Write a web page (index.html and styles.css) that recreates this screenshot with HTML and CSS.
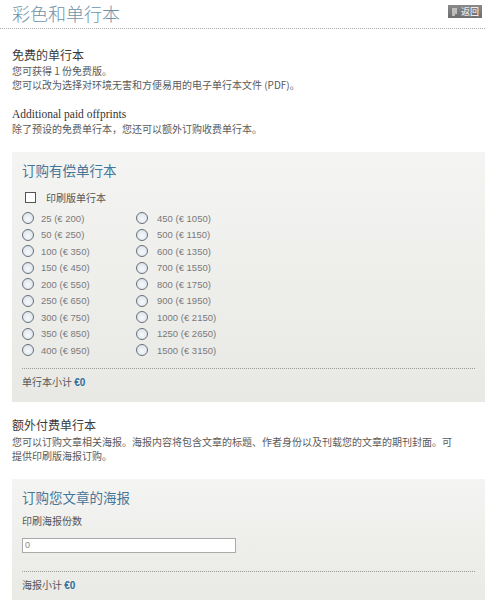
FILE: index.html
```html
<!DOCTYPE html>
<html lang="zh">
<head>
<meta charset="utf-8">
<title>彩色和单行本</title>
<link rel="stylesheet" href="styles.css">
</head>
<body>
<header class="top">
  <h1 class="title">彩色和单行本</h1>
  <a class="back-btn"><svg class="back-ico" width="7" height="8" viewBox="0 0 7 8"><path d="M1 1h5M1 3h5M1 5h5M1 7h3" stroke="#fff" stroke-width="1" fill="none"/></svg>返回</a>
</header>
<main class="page">
  <h2 class="sec-title">免费的单行本</h2>
  <p class="small">您可获得 1 份免费版。<br>您可以改为选择对环境无害和方便易用的电子单行本文件 (PDF)。</p>
  <h3 class="serif-title">Additional paid offprints</h3>
  <p class="small one">除了预设的免费单行本，您还可以额外订购收费单行本。</p>

  <section class="box box1">
    <h2 class="box-title">订购有偿单行本</h2>
    <label class="check-row"><span class="checkbox"></span>印刷版单行本</label>
    <div class="radios">
      <label class="radio-row"><span class="radio"></span>25 (€ 200)</label>
      <label class="radio-row"><span class="radio"></span>50 (€ 250)</label>
      <label class="radio-row"><span class="radio"></span>100 (€ 350)</label>
      <label class="radio-row"><span class="radio"></span>150 (€ 450)</label>
      <label class="radio-row"><span class="radio"></span>200 (€ 550)</label>
      <label class="radio-row"><span class="radio"></span>250 (€ 650)</label>
      <label class="radio-row"><span class="radio"></span>300 (€ 750)</label>
      <label class="radio-row"><span class="radio"></span>350 (€ 850)</label>
      <label class="radio-row"><span class="radio"></span>400 (€ 950)</label>
      <label class="radio-row"><span class="radio"></span>450 (€ 1050)</label>
      <label class="radio-row"><span class="radio"></span>500 (€ 1150)</label>
      <label class="radio-row"><span class="radio"></span>600 (€ 1350)</label>
      <label class="radio-row"><span class="radio"></span>700 (€ 1550)</label>
      <label class="radio-row"><span class="radio"></span>800 (€ 1750)</label>
      <label class="radio-row"><span class="radio"></span>900 (€ 1950)</label>
      <label class="radio-row"><span class="radio"></span>1000 (€ 2150)</label>
      <label class="radio-row"><span class="radio"></span>1250 (€ 2650)</label>
      <label class="radio-row"><span class="radio"></span>1500 (€ 3150)</label>
    </div>
    <div class="subtotal">单行本小计 <b class="amount">€0</b></div>
  </section>

  <h2 class="sec-title sec2">额外付费单行本</h2>
  <p class="small two">您可以订购文章相关海报。海报内容将包含文章的标题、作者身份以及刊载您的文章的期刊封面。可提供印刷版海报订购。</p>

  <section class="box box2">
    <h2 class="box-title">订购您文章的海报</h2>
    <div class="field-label">印刷海报份数</div>
    <div class="input">0</div>
    <div class="subtotal sub2">海报小计 <b class="amount">€0</b></div>
  </section>
</main>
</body>
</html>
```

FILE: styles.css
```css
* { box-sizing: border-box; }
html, body { margin: 0; padding: 0; background: #fff; }
body {
  font-family: "Noto Sans CJK SC", "Liberation Sans", sans-serif;
  color: #555;
  width: 485px;
  overflow: hidden;
}
.top {
  display: flex;
  justify-content: space-between;
  align-items: flex-start;
  height: 29px;
  border-bottom: 1px dotted #aaa;
  padding: 0 3px 0 12px;
}
.title {
  margin: 0;
  font-size: 18px;
  line-height: 26px;
  font-weight: 300;
  color: #6d93a8;
}
.back-btn {
  margin-top: 5px;
  display: flex;
  align-items: center;
  gap: 3px;
  height: 13px;
  width: 34px;
  padding: 0 3px;
  background: linear-gradient(#8a8a8a, #6e6e6e);
  color: #fff;
  font-size: 9px;
  line-height: 13px;
}
.back-ico { flex: none; }
.page { padding-left: 12px; }
.sec-title {
  margin: 18px 0 0 0;
  font-size: 12px;
  line-height: 16px;
  font-weight: normal;
  color: #3a3a3a;
}
.small {
  margin: 1px 0 0 0;
  font-size: 10px;
  line-height: 14px;
  color: #5a5a5a;
}
.serif-title {
  margin: 15px 0 0 0;
  font-family: "Liberation Serif", serif;
  font-size: 11.5px;
  line-height: 14px;
  font-weight: normal;
  color: #333;
}
.small.one { margin-top: 1px; line-height: 14px; }
.box {
  margin-top: 16px;
  background: linear-gradient(#f4f4f2, #e8e8e5);
  padding: 9px 10px 12px 10px;
}
.box-title {
  margin: 0;
  font-size: 13.5px;
  line-height: 18px;
  font-weight: normal;
  color: #44779a;
}
.check-row {
  margin-top: 11px;
  display: flex;
  align-items: center;
  height: 14px;
  font-size: 10px;
  color: #555;
  padding-left: 3px;
}
.checkbox {
  width: 11px;
  height: 11px;
  border: 1px solid #555;
  background: #fff;
  margin-right: 10px;
}
.radios {
  margin-top: 6px;
  display: grid;
  grid-template-columns: 114px 114px;
  grid-template-rows: repeat(9, 16.5px);
  grid-auto-flow: column;
}
.radio-row {
  display: flex;
  align-items: center;
  font-family: "Liberation Sans", sans-serif;
  font-size: 9.5px;
  color: #7a7a7a;
}
.radio-row:nth-child(n+10) .radio { margin-right: 9px; }
.radio {
  width: 12px;
  height: 12px;
  border-radius: 50%;
  border: 1px solid #6a6f78;
  background: radial-gradient(circle at 50% 60%, #f6f9fb, #d4dfe8);
  margin-right: 7px;
}
.subtotal {
  margin-top: 9px;
  border-top: 1px dotted #999;
  padding-top: 6px;
  font-size: 10px;
  line-height: 14px;
  color: #555;
}
.amount {
  color: #2f6f9a;
  font-family: "Liberation Sans", sans-serif;
  font-weight: bold;
}
.sec2 { margin-top: 15px; }
.small.two { margin-top: 2px; line-height: 14.5px; width: 446px; }
.box2 { margin-top: 15px; padding-bottom: 20px; }
.field-label {
  margin-top: 8px;
  font-size: 10px;
  line-height: 14px;
  color: #555;
}
.input {
  margin-top: 10px;
  width: 214px;
  height: 15px;
  background: #fff;
  border: 1px solid #aaa;
  font-family: "Liberation Sans", sans-serif;
  font-size: 9px;
  line-height: 13px;
  padding-left: 2px;
  color: #888;
}
.sub2 { margin-top: 18px; }
```
